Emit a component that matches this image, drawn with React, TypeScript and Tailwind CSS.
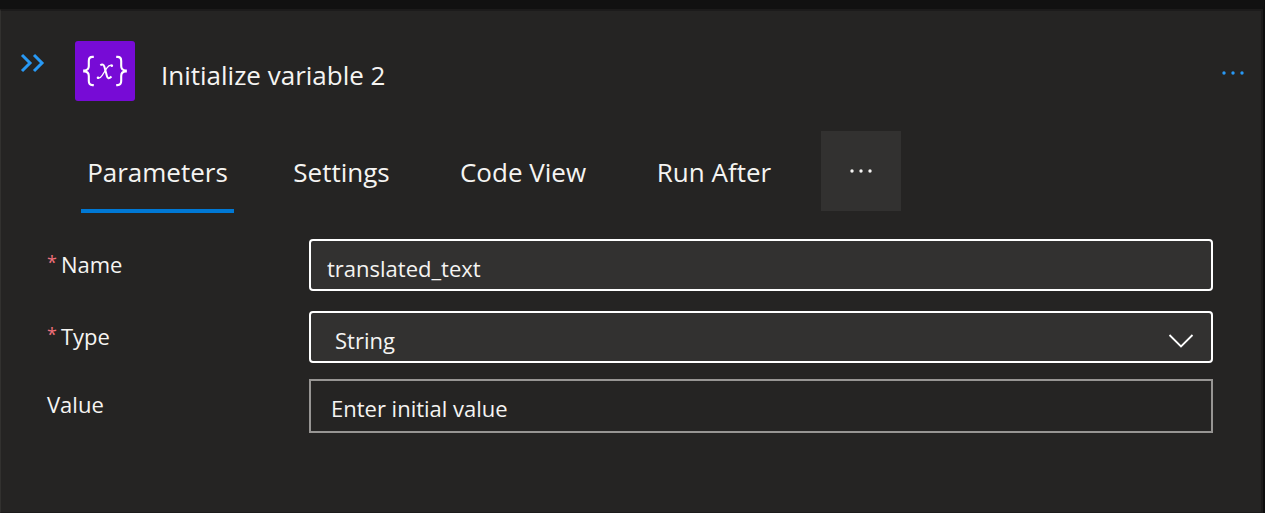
import { useState } from "react";

const tabs = [
  { name: "Parameters", width: "w-[153px]" },
  { name: "Settings", width: "w-[115px]" },
  { name: "Code View", width: "w-[148px]" },
  { name: "Run After", width: "w-[134px]" },
];

function Dots({ className }: { className: string }) {
  return (
    <svg viewBox="0 0 24 6" className={className} fill="currentColor" aria-hidden="true">
      <circle cx="3" cy="3" r="1.7" />
      <circle cx="12" cy="3" r="1.7" />
      <circle cx="21" cy="3" r="1.7" />
    </svg>
  );
}

function VariableIcon() {
  return (
    <svg viewBox="0 0 60 60" className="h-15 w-15 shrink-0" fill="none" stroke="#fff" aria-hidden="true">
      <rect width="60" height="60" rx="3" fill="#770bd6" stroke="none" />
      <path d="M18.8 15.9h-1.4c-2.5 0-3.6 1.4-3.6 4v5.2c0 2.8-1.3 4.3-4.6 4.5v.8c3.3.2 4.6 1.7 4.6 4.5v5.2c0 2.6 1.1 4 3.6 4h1.4" strokeWidth="2.1" />
      <path d="M41.2 15.9h1.4c2.5 0 3.6 1.4 3.6 4v5.2c0 2.8 1.3 4.3 4.6 4.5v.8c-3.3.2-4.6 1.7-4.6 4.5v5.2c0 2.6-1.1 4-3.6 4h-1.4" strokeWidth="2.1" />
      <path d="M25.3 24.2c2-1.4 3.4-.8 4.1 1.6l2.5 9.2c.6 2.5 1.9 3.1 4.6.6" strokeWidth="2" />
      <path d="M37.2 24.4c-2.2-.9-3.6.1-5.4 2.8l-4.6 7.2c-1.4 2.3-2.8 3.4-4.9 2.4" strokeWidth="1.2" />
      <circle cx="36.8" cy="24.7" r="1.3" fill="#fff" stroke="none" />
      <circle cx="23" cy="36.7" r="1.3" fill="#fff" stroke="none" />
    </svg>
  );
}

function Required() {
  return <span className="mr-1 align-top text-[18px] leading-7 text-[#f1707b]">*</span>;
}

export default function App() {
  const [active, setActive] = useState("Parameters");
  const [name, setName] = useState("translated_text");
  const [value, setValue] = useState("");

  return (
    <div className="flex min-h-screen flex-col border-t-9 border-r-2 border-t-[#111111] border-r-[#0e0e0e] bg-[#252423] font-['Open_Sans','Noto_Sans',sans-serif] text-[#f5f4f2]">
      <main className="grow border-t-2 border-r-2 border-b border-l border-[#1c1b1b] border-l-[#32312f]">
        <header className="flex items-start pt-[30px] pr-4 pl-[18px]">
          <button type="button" aria-label="Collapse panel" className="mt-[9px] text-[#2899f5]">
            <svg viewBox="0 0 28 26" className="h-[26px] w-7" fill="none" stroke="currentColor" strokeWidth="3" aria-hidden="true">
              <path d="M3 5l8 8-8 8" />
              <path d="M15 5l8 8-8 8" />
            </svg>
          </button>
          <div className="ml-7 flex grow items-center gap-[26px]">
            <VariableIcon />
            <h1 className="pt-2 text-[26px] leading-8">Initialize variable 2</h1>
          </div>
          <button type="button" aria-label="More commands" className="mt-5 flex h-6 items-center text-[#2899f5]">
            <Dots className="w-6" />
          </button>
        </header>

        <div role="tablist" className="mt-[30px] flex items-start pl-20">
          {tabs.map((tab) => (
            <button
              key={tab.name}
              type="button"
              role="tab"
              aria-selected={active === tab.name}
              onClick={() => setActive(tab.name)}
              className={`mr-[50px] h-[82px] shrink-0 border-b-4 pt-1 text-[26px] leading-8 whitespace-nowrap nth-4:mr-10 ${tab.width} ${
                active === tab.name ? "border-[#0078d4]" : "border-transparent"
              }`}
            >
              {tab.name}
            </button>
          ))}
          <button type="button" aria-label="More tabs" className="flex size-20 shrink-0 items-center justify-center bg-[#323130]">
            <Dots className="w-6" />
          </button>
        </div>

        <form className="mt-[26px] grid grid-cols-[262px_1fr] pr-12 pl-[46px] text-[22px] leading-8">
          <label htmlFor="name" className="pt-[9px]">
            <Required />
            Name
          </label>
          <input
            id="name"
            value={name}
            onChange={(e) => setName(e.target.value)}
            className="mb-5 h-[52px] w-full rounded-sm border-2 border-white bg-[#323130] px-4 pt-1.5 outline-none"
          />
          <label htmlFor="type" className="pt-[9px]">
            <Required />
            Type
          </label>
          <div className="mb-4 grid items-center">
            <select
              id="type"
              className="col-start-1 row-start-1 h-[52px] w-full appearance-none rounded-sm border-2 border-white bg-[#323130] px-6 pt-1.5 outline-none"
            >
              <option>String</option>
              <option>Boolean</option>
              <option>Integer</option>
              <option>Float</option>
              <option>Object</option>
              <option>Array</option>
            </select>
            <svg viewBox="0 0 26 16" className="pointer-events-none col-start-1 row-start-1 mt-2 mr-[19px] h-4 w-[26px] justify-self-end" fill="none" stroke="#fff" strokeWidth="1.8" aria-hidden="true">
              <path d="M1.5 2L13 13.5 24.5 2" />
            </svg>
          </div>
          <label htmlFor="value" className="pt-[9px]">
            Value
          </label>
          <input
            id="value"
            value={value}
            placeholder="Enter initial value"
            onChange={(e) => setValue(e.target.value)}
            className="h-[54px] w-full border-2 border-[#979593] bg-transparent px-5 pt-1 outline-none placeholder:text-[#f5f4f2]"
          />
        </form>
      </main>
    </div>
  );
}
